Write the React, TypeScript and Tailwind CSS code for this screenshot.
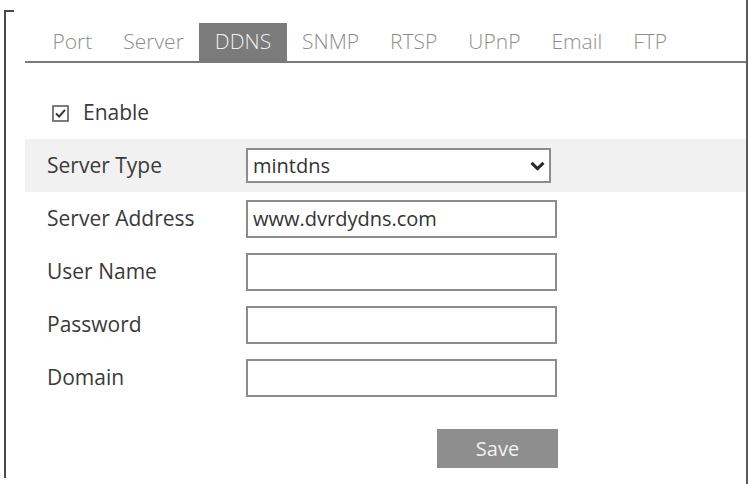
import { FC } from "react";

const tabs = ["Port", "Server", "DDNS", "SNMP", "RTSP", "UPnP", "Email", "FTP"];

const fields: { label: string; value?: string; select?: boolean }[] = [
  { label: "Server Type", value: "mintdns", select: true },
  { label: "Server Address", value: "www.dvrdydns.com" },
  { label: "User Name" },
  { label: "Password" },
  { label: "Domain" },
];

const Chevron: FC = () => (
  <svg width="15" height="10" viewBox="0 0 15 10" className="shrink-0">
    <path d="M1.5 1.8 L7.5 7.6 L13.5 1.8" fill="none" stroke="#2a2a2a" strokeWidth="3" />
  </svg>
);

const CheckBox: FC = () => (
  <svg width="17" height="17" viewBox="0 0 17 17" className="shrink-0">
    <rect x="1" y="1" width="15" height="15" fill="#fff" stroke="#5c5c5c" strokeWidth="1.6" />
    <path d="M4 8.4 L7.1 11.6 L13 4.8" fill="none" stroke="#333" strokeWidth="2" />
  </svg>
);

const FieldRow: FC<{ label: string; value?: string; select?: boolean }> = ({ label, value, select }) => (
  <div className={`flex h-[53px] items-center pl-[22px] ${select ? "bg-[#f1f1f1]" : ""}`}>
    <div className="w-[199px] text-[21px] text-[#3a3a3a]">{label}</div>
    {select ? (
      <div className="flex h-[35px] w-[305px] items-center justify-between border-2 border-[#8c8c8c] bg-white pl-[5px] pr-[4px] text-[20px] text-[#333]">
        <span>{value}</span>
        <Chevron />
      </div>
    ) : (
      <div className="flex h-[38px] w-[311px] items-center border-2 border-[#8c8c8c] bg-white pl-[5px] text-[20px] text-[#333]">
        {value}
      </div>
    )}
  </div>
);

export default function App() {
  return (
    <div className="flex h-[484px] w-[748px] overflow-hidden bg-white font-['Open_Sans',sans-serif]">
      <div className="mb-[6px] ml-[4px] mt-[10px] w-[10px] border-l-2 border-t-2 border-[#4a4a4a]" />
      <div className="flex flex-1 flex-col pl-[11px] pt-[23px]">
        <div className="flex h-[40px] border-b-2 border-[#7a7a7a] pl-[12px]">
          {tabs.map((t) => (
            <div
              key={t}
              className={`flex items-center px-[15.5px] text-[21px] font-light ${
                t === "DDNS" ? "bg-[#7b7b7b] text-[#f0f0f0]" : "text-[#8d8d8d]"
              }`}
            >
              {t}
            </div>
          ))}
        </div>

        <div className="mt-[35px] flex h-[30px] items-center gap-[14px] pl-[27px]">
          <CheckBox />
          <span className="text-[21px] text-[#3a3a3a]">Enable</span>
        </div>

        <div className="mt-[11px] flex flex-col">
          {fields.map((f) => (
            <FieldRow key={f.label} {...f} />
          ))}
        </div>

        <div className="mt-[25px] pl-[412px]">
          <button className="flex h-[39px] w-[121px] items-center justify-center bg-[#8e8e8e] text-[20px] text-[#f2f2f2]">
            Save
          </button>
        </div>
      </div>
      <div className="w-[2px] bg-[#5a5a5a]" />
    </div>
  );
}
